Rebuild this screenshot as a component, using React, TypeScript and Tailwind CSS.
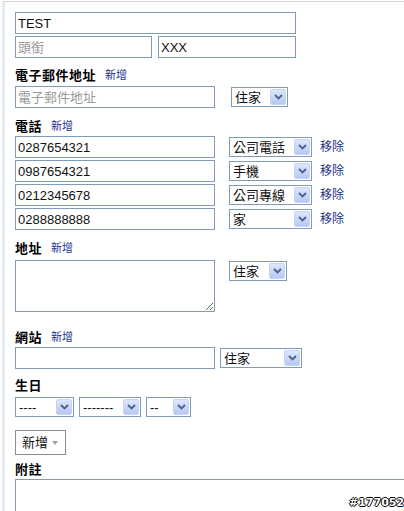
import React from "react";

const cjk = "font-['Liberation_Sans','Noto_Sans_CJK_TC',sans-serif]";

function Arrow() {
  return (
    <span className="ml-auto mr-[1px] flex h-[16px] w-[16px] items-center justify-center rounded-[2px] border border-[#c6d5f7] bg-gradient-to-b from-[#dde7fd] to-[#b5c9f4]">
      <svg width="9" height="6" viewBox="0 0 9 6">
        <path d="M1 1 L4.5 4.5 L8 1" fill="none" stroke="#4d6185" strokeWidth="1.8" />
      </svg>
    </span>
  );
}

function Sel({ label, w }: { label: string; w: string }) {
  return (
    <div className={`flex h-[20px] items-center border border-[#7f9db9] bg-white ${w}`}>
      <span className={`pl-[3px] text-[13px] leading-none text-[#111] ${cjk}`}>{label}</span>
      <Arrow />
    </div>
  );
}

function Label({ title, add = true, cls }: { title: string; add?: boolean; cls: string }) {
  return (
    <div className={`flex h-[16px] items-center ${cls}`}>
      <span className={`text-[13px] font-bold leading-none tracking-[0.5px] text-black ${cjk}`}>{title}</span>
      {add && <span className={`ml-[9px] text-[11px] leading-none text-[#1c2f8f] ${cjk}`}>新增</span>}
    </div>
  );
}

function Input({ value, placeholder, w }: { value?: string; placeholder?: string; w: string }) {
  return (
    <div className={`flex h-[22px] items-center border border-[#7f9db9] bg-white pl-[2px] ${w}`}>
      {value ? (
        <span className={`text-[13px] leading-none text-[#111] ${cjk}`}>{value}</span>
      ) : (
        <span className={`text-[13px] leading-none text-[#9a9a9a] ${cjk}`}>{placeholder}</span>
      )}
    </div>
  );
}

const phones = [
  ["0287654321", "公司電話"],
  ["0987654321", "手機"],
  ["0212345678", "公司專線"],
  ["0288888888", "家"],
];

export default function App() {
  return (
    <div className="relative h-[511px] w-[404px] overflow-hidden bg-white pl-[2px] pt-[1px]">
      <div className="h-full border-l-[3px] border-t border-l-[#e4ebf2] border-t-[#d3d3d3] pl-[10px] pt-[10px]">
        <Input value="TEST" w="w-[281px]" />
        <div className="mt-[2px] flex gap-[6px]">
          <Input placeholder="頭銜" w="w-[137px]" />
          <Input value="XXX" w="w-[138px]" />
        </div>

        <Label title="電子郵件地址" cls="mt-[9px]" />
        <div className="mt-[3px] flex items-center">
          <Input placeholder="電子郵件地址" w="w-[200px]" />
          <div className="ml-[16px]">
            <Sel label="住家" w="w-[57px]" />
          </div>
        </div>

        <Label title="電話" cls="mt-[10px]" />
        <div className="mt-[2px] flex flex-col gap-[2px]">
          {phones.map(([n, t]) => (
            <div key={n} className="flex items-center">
              <Input value={n} w="w-[200px]" />
              <div className="ml-[14px]">
                <Sel label={t} w="w-[83px]" />
              </div>
              <span className={`ml-[8px] text-[12px] leading-none text-[#1c2f8f] ${cjk}`}>移除</span>
            </div>
          ))}
        </div>

        <Label title="地址" cls="mt-[10px]" />
        <div className="mt-[4px] flex items-start">
          <textarea className="h-[52px] w-[200px] resize border border-[#7f9db9] bg-white outline-none" />
          <div className="ml-[14px] mt-[1px]">
            <Sel label="住家" w="w-[58px]" />
          </div>
        </div>

        <Label title="網站" cls="mt-[17px]" />
        <div className="mt-[2px] flex items-center">
          <Input w="w-[200px]" />
          <div className="ml-[5px]">
            <Sel label="住家" w="w-[82px]" />
          </div>
        </div>

        <Label title="生日" add={false} cls="mt-[8px]" />
        <div className="mt-[4px] flex gap-[5px]">
          <Sel label="----" w="w-[59px]" />
          <Sel label="-------" w="w-[62px]" />
          <Sel label="--" w="w-[45px]" />
        </div>

        <div className="mt-[13px] flex h-[25px] w-[51px] items-center border border-[#8c8c8c] bg-white pl-[6px]">
          <span className={`text-[13px] leading-none text-[#111] ${cjk}`}>新增</span>
          <svg className="ml-[4px]" width="6" height="4" viewBox="0 0 6 4">
            <path d="M0 0 H6 L3 4 Z" fill="#a0a0a0" />
          </svg>
        </div>

        <Label title="附註" add={false} cls="mt-[6px]" />
        <div className="mt-[2px] h-[60px] w-[420px] border border-[#7f9db9] bg-white" />
      </div>
      <div className="absolute left-[349px] top-[497px] font-['DejaVu_Sans',sans-serif] text-[11px] font-bold leading-none text-white [text-shadow:-1px_0_#000,1px_0_#000,0_-1px_#000,0_1px_#000]">
        #177052
      </div>
    </div>
  );
}
